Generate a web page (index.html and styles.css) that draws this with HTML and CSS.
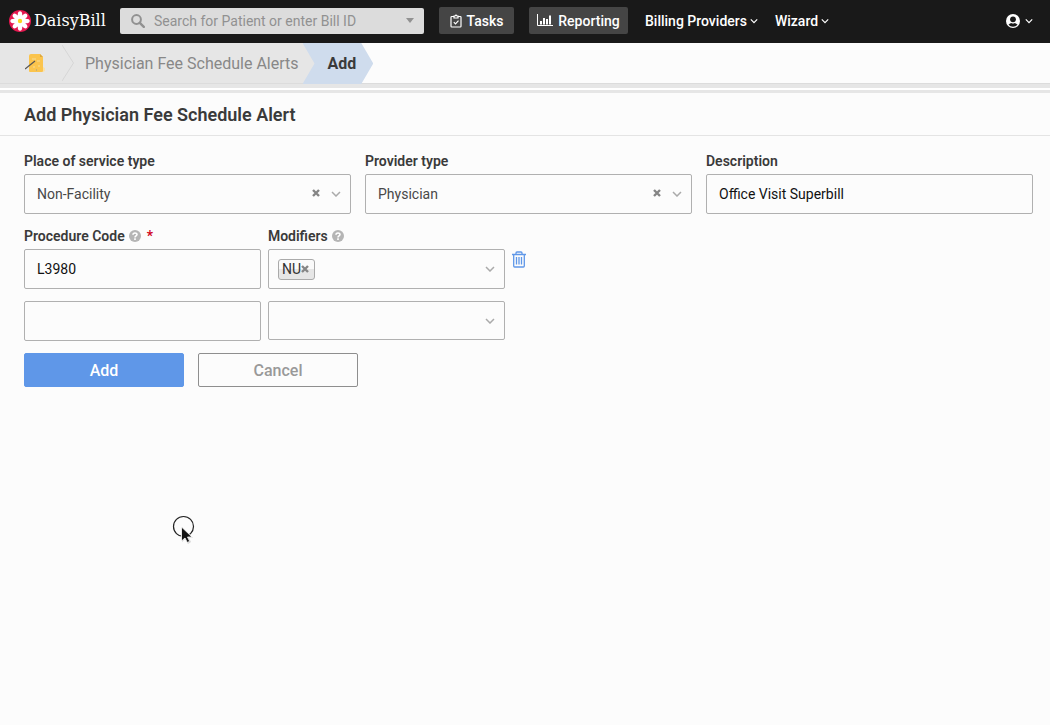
FILE: index.html
```html
<!DOCTYPE html>
<html lang="en">
<head>
<meta charset="utf-8">
<meta name="viewport" content="width=device-width, initial-scale=1">
<title>Add Physician Fee Schedule Alert</title>
<link rel="stylesheet" href="styles.css">
</head>
<body>
<svg class="sprite" aria-hidden="true">
  <symbol id="chevron" viewBox="0 0 10 6"><path d="M1 1l4 4 4-4" fill="none" stroke="currentColor" stroke-width="1.5"/></symbol>
  <symbol id="cross" viewBox="0 0 8 8"><path d="M1 1l6 6M7 1l-6 6" fill="none" stroke="currentColor" stroke-width="2.4"/></symbol>
  <symbol id="help" viewBox="0 0 12 12"><circle cx="6" cy="6" r="6" fill="#b5b5b5"/><path d="M4 4.7C4 2.4 8 2.4 8 4.6 8 6 6 5.900 6 7.400M6 8.300v1.600" fill="none" stroke="#fff" stroke-width="1.600"/></symbol>
</svg>

<header class="topbar">
  <a class="brand" href="#">
    <svg class="brand-mark" viewBox="0 0 22 22" aria-hidden="true">
      <circle cx="11" cy="11" r="11" fill="#e5174f"/>
      <g fill="#fff">
        <ellipse cx="11" cy="5.300" rx="2.300" ry="4"/>
        <ellipse cx="11" cy="5.300" rx="2.300" ry="4" transform="rotate(45 11 11)"/>
        <ellipse cx="11" cy="5.300" rx="2.300" ry="4" transform="rotate(90 11 11)"/>
        <ellipse cx="11" cy="5.300" rx="2.300" ry="4" transform="rotate(135 11 11)"/>
        <ellipse cx="11" cy="5.300" rx="2.300" ry="4" transform="rotate(180 11 11)"/>
        <ellipse cx="11" cy="5.300" rx="2.300" ry="4" transform="rotate(225 11 11)"/>
        <ellipse cx="11" cy="5.300" rx="2.300" ry="4" transform="rotate(270 11 11)"/>
        <ellipse cx="11" cy="5.300" rx="2.300" ry="4" transform="rotate(315 11 11)"/>
        <circle cx="11" cy="11" r="5"/>
      </g>
      <circle cx="11" cy="11" r="2.200" fill="#f9d71c"/>
    </svg>
    <span>DaisyBill</span>
  </a>
  <div class="search">
    <svg class="search-icon" viewBox="0 0 14 14" aria-hidden="true"><circle cx="5.500" cy="5.500" r="4.400" fill="none" stroke="#919191" stroke-width="2"/><path d="M8.800 8.800l4 4" stroke="#919191" stroke-width="2.400" stroke-linecap="round"/></svg>
    <input class="search-input" type="text" aria-label="Search" placeholder="Search for Patient or enter Bill ID">
    <svg class="caret" viewBox="0 0 8 5" aria-hidden="true"><path d="M0 0h8L4 5z" fill="#919191"/></svg>
  </div>
  <nav class="nav">
    <a class="nav-button" href="#">
      <svg class="tasks-icon" viewBox="0 0 12 14" aria-hidden="true"><path d="M3.500 2.500H1.800Q1 2.500 1 3.300v8.900q0 .8.800.8h8.400q.8 0 .8-.8V3.300q0-.8-.8-.8H8.500M4 4h4V2H7Q6 .2 5 2H4zM3.800 8.200l1.700 1.700 3-3.200" fill="none" stroke="currentColor" stroke-width="1.200"/></svg>
      Tasks
    </a>
    <a class="nav-button" href="#">
      <svg class="report-icon" viewBox="0 0 16 13" aria-hidden="true"><path d="M.5 0v11.500H16" fill="none" stroke="currentColor"/><path d="M3 7h2v3.500H3zM6 4h2v6.500H6zM9 5h2v5.500H9zM12 1.500h2v9h-2z" fill="currentColor"/></svg>
      Reporting
    </a>
    <a class="nav-link" href="#">Billing Providers <svg class="nav-chevron" aria-hidden="true"><use href="#chevron"/></svg></a>
    <a class="nav-link" href="#">Wizard <svg class="nav-chevron" aria-hidden="true"><use href="#chevron"/></svg></a>
  </nav>
  <button class="account" type="button" aria-label="Account">
    <svg class="account-icon" viewBox="0 0 14 14" aria-hidden="true"><circle cx="7" cy="7" r="7" fill="#fff"/><circle cx="7" cy="5.300" r="2.900" fill="#191919"/><path d="M2.500 10.800Q3.500 9.400 5.200 9q1.800 1 3.600 0 1.700.4 2.700 1.800Q9.800 12.700 7 12.700t-4.500-1.900z" fill="#191919"/></svg>
    <svg class="nav-chevron" aria-hidden="true"><use href="#chevron"/></svg>
  </button>
</header>

<nav class="crumbs" aria-label="Breadcrumb">
  <a class="crumb crumb-home" href="#" aria-label="Home">
    <svg class="note-icon" viewBox="0 0 20 20" aria-hidden="true"><path d="M6 1h9l3 3v14q0 1-1 1H5q-1 0-1-1V3q0-2 2-2z" fill="#fbc44d"/><path d="M15 1v3h3z" fill="#dda83d"/><path d="M18 14l2 1v3l-2 1z" fill="#fae1a8"/><path d="M7 6h2M12 8h3M8 14h2M13 13h2M10 5v2" stroke="#f6dc98"/><path d="M11 17h1" stroke="#8e9aa0"/><path d="M0 16L10 8" stroke="#555" stroke-width="1.300"/></svg>
  </a>
  <svg class="crumb-sep" viewBox="0 0 12 40" preserveAspectRatio="none" aria-hidden="true"><path d="M0 2l11.500 18L0 38" fill="none" stroke="#d6d6d6"/></svg>
  <a class="crumb crumb-parent" href="#">Physician Fee Schedule Alerts</a>
  <span class="crumb crumb-current" aria-current="page">Add</span>
</nav>

<main>
  <h1 class="title">Add Physician Fee Schedule Alert</h1>
  <form class="form">
    <div class="row row-main">
      <div class="field">
        <label class="label" for="pos">Place of service type</label>
        <div class="picker">
          <select class="control" id="pos"><option>Non-Facility</option></select>
          <button class="clear" type="button" aria-label="Clear place of service type"><svg class="cross" aria-hidden="true"><use href="#cross"/></svg></button>
          <svg class="chevron" aria-hidden="true"><use href="#chevron"/></svg>
        </div>
      </div>
      <div class="field">
        <label class="label" for="provider">Provider type</label>
        <div class="picker">
          <select class="control" id="provider"><option>Physician</option></select>
          <button class="clear" type="button" aria-label="Clear provider type"><svg class="cross" aria-hidden="true"><use href="#cross"/></svg></button>
          <svg class="chevron" aria-hidden="true"><use href="#chevron"/></svg>
        </div>
      </div>
      <div class="field">
        <label class="label" for="description">Description</label>
        <input class="control" id="description" type="text" value="Office Visit Superbill">
      </div>
    </div>
    <div class="row row-code">
      <div class="field">
        <label class="label" for="code-1">Procedure Code <svg class="help" aria-hidden="true"><use href="#help"/></svg><span class="required">*</span></label>
        <input class="control" id="code-1" type="text" value="L3980" required>
      </div>
      <div class="field">
        <label class="label" for="mod-1">Modifiers <svg class="help" aria-hidden="true"><use href="#help"/></svg></label>
        <div class="picker tags">
          <span class="tag">NU<button class="tag-remove" type="button" aria-label="Remove NU"><svg class="cross" aria-hidden="true"><use href="#cross"/></svg></button></span>
          <input class="tag-input" id="mod-1" type="text">
          <svg class="chevron" aria-hidden="true"><use href="#chevron"/></svg>
        </div>
      </div>
      <button class="trash" type="button" aria-label="Delete row">
        <svg class="trash-icon" viewBox="0 0 14 17" aria-hidden="true"><path d="M0 3.500h14M4 3.500V2q0-1 1-1h4q1 0 1 1v1.500M1.700 3.500V15q0 1 1 1h8.600q1 0 1-1V3.500M4.500 6v7.500M7 6v7.500M9.500 6v7.500" fill="none" stroke="#5f97e8" stroke-width="1.300"/></svg>
      </button>
    </div>
    <div class="row row-code">
      <input class="control" type="text" aria-label="Procedure Code">
      <div class="picker">
        <select class="control control-blank" aria-label="Modifiers"><option></option></select>
        <svg class="chevron" aria-hidden="true"><use href="#chevron"/></svg>
      </div>
    </div>
    <div class="actions">
      <button class="button button-primary" type="submit">Add</button>
      <button class="button" type="button">Cancel</button>
    </div>
  </form>
</main>

<svg class="cursor" viewBox="0 0 26 32" aria-hidden="true">
  <circle cx="11.500" cy="11.500" r="10" fill="none" stroke="#222" stroke-width="1.200"/>
  <path d="M10 12v15l3-3 3 5 3-2-2-4h4z" fill="#bbb" opacity=".6"/>
  <path d="M9.500 12v14l3.500-3 2.300 4.500 2.400-1.200L15.500 22H20z" fill="#111" stroke="#fff" stroke-width=".8"/>
</svg>
</body>
</html>
```
FILE: styles.css
```css
* {
  box-sizing: border-box;
}

body {
  margin: 0;
  min-height: 100vh;
  background: #fcfcfc;
  color: #3a3a3a;
  font-family: Roboto, "Liberation Sans", sans-serif;
  font-size: 14px;
}

a {
  color: inherit;
  text-decoration: none;
}

button,
input,
select {
  font: inherit;
}

.sprite {
  display: none;
}

/* Top bar */
.topbar {
  display: flex;
  align-items: center;
  height: 43px;
  padding: 0 17px 2px 9px;
  background: #191919;
  color: #fff;
}

.brand {
  display: flex;
  align-items: center;
  gap: 3px;
  width: 111px;
  font-family: "DejaVu Serif", serif;
  font-size: 16px;
}

.brand-mark {
  flex: none;
  width: 22px;
  height: 22px;
}

.search {
  display: flex;
  align-items: center;
  gap: 9px;
  width: 304px;
  height: 26px;
  padding: 0 10px 0 11px;
  border-radius: 2px;
  background: #dcdcdc;
}

.search-icon {
  flex: none;
  width: 14px;
  height: 14px;
}

.search-input {
  flex: 1;
  min-width: 0;
  padding: 0;
  border: 0;
  background: transparent;
}

.search-input::placeholder {
  color: #919191;
}

.caret {
  flex: none;
  width: 8px;
  height: 5px;
}

.nav {
  display: flex;
  align-items: center;
  font-weight: 500;
}

.nav-button {
  display: flex;
  align-items: center;
  justify-content: center;
  gap: 5px;
  width: 99px;
  height: 27px;
  margin-left: 15px;
  border-radius: 2px;
  background: #454545;
}

.nav-button:first-child {
  width: 75px;
}

.tasks-icon {
  width: 12px;
  height: 14px;
}

.report-icon {
  width: 16px;
  height: 13px;
}

.nav-link {
  display: flex;
  align-items: center;
  gap: 3px;
  margin-left: 17px;
}

.nav-chevron {
  width: 8px;
  height: 6px;
}

.account {
  display: flex;
  align-items: center;
  gap: 5px;
  margin-left: auto;
  padding: 0;
  border: 0;
  background: transparent;
  color: #fff;
}

.account-icon {
  width: 14px;
  height: 14px;
}

/* Breadcrumb */
.crumbs {
  display: flex;
  height: 50px;
  border-bottom: 3px solid #e6e6e6;
  background: linear-gradient(#fcfcfc 40px, #dcdcdc 40px 41px, #e6e6e6 41px 45px, #fff 45px);
  font-size: 16px;
}

.crumb {
  display: flex;
  align-items: center;
  height: 40px;
  background: #e6e6e6;
}

.crumb-home {
  width: 62px;
  padding-left: 25px;
}

.note-icon {
  width: 20px;
  height: 20px;
}

.crumb-sep {
  width: 12px;
  height: 40px;
  background: #e6e6e6;
}

.crumb-parent {
  padding: 0 17px 0 11px;
  color: #888;
}

.crumb-current {
  height: 41px;
  margin-left: -13px;
  padding: 0 17px 0 25px;
  background: #cfdced;
  clip-path: polygon(0 0, calc(100% - 12px) 0, 100% 50%, calc(100% - 12px) 100%, 0 100%, 12px 50%);
  font-weight: 700;
}

/* Form */
.title {
  margin: 0;
  padding: 10px 24px 8px;
  border-bottom: 1px solid #e4e4e4;
  font-size: 18px;
  font-weight: 600;
  line-height: 24px;
}

.form {
  display: grid;
  gap: 12px;
  padding: 15px 17px 24px 24px;
}

.row {
  display: grid;
}

.row-main {
  grid-template-columns: repeat(3, minmax(0, 1fr));
  gap: 14px;
}

.row-code {
  grid-template-columns: minmax(0, 5fr) minmax(0, 5fr) minmax(0, 11fr);
  gap: 7px;
}

.label {
  display: flex;
  align-items: center;
  gap: 4px;
  margin-bottom: 3px;
  font-weight: 600;
  line-height: 20px;
}

.help {
  width: 12px;
  height: 12px;
}

.required {
  margin-left: 2px;
  color: #d0021b;
}

.control {
  display: block;
  width: 100%;
  height: 40px;
  padding: 0 12px;
  border: 1px solid #b0b0b0;
  border-radius: 2px;
  background: transparent;
  color: #111;
}

select.control {
  appearance: none;
  color: #484848;
}

.row .control-blank {
  height: 39px;
}

.picker {
  position: relative;
}

.chevron {
  position: absolute;
  top: 17px;
  right: 10px;
  width: 10px;
  height: 6px;
  color: #aaa;
  pointer-events: none;
}

.clear {
  position: absolute;
  top: 11px;
  right: 27px;
  display: flex;
  padding: 4px;
  border: 0;
  background: transparent;
  color: #858585;
}

.cross {
  width: 8px;
  height: 8px;
}

.tags {
  display: flex;
  align-items: center;
  height: 40px;
  padding: 0 30px 0 9px;
  border: 1px solid #b0b0b0;
  border-radius: 2px;
}

.tags .chevron {
  top: 16px;
  right: 9px;
}

.tag {
  display: flex;
  align-items: center;
  height: 21px;
  padding: 0 5px 0 3px;
  border: 1px solid #aaa;
  border-radius: 3px;
  background: linear-gradient(#fafafa 50%, #e6e6e6 50%);
  color: #333;
}

.tag-remove {
  display: flex;
  padding: 0;
  border: 0;
  background: transparent;
  color: #858585;
}

.tag-input {
  flex: 1;
  min-width: 0;
  border: 0;
  background: transparent;
}

.trash {
  align-self: start;
  justify-self: start;
  display: flex;
  margin-top: 25px;
  padding: 0;
  border: 0;
  background: transparent;
}

.trash-icon {
  width: 14px;
  height: 17px;
}

.actions {
  display: flex;
  gap: 14px;
}

.button {
  width: 160px;
  height: 34px;
  padding: 0;
  border: 1px solid #8e8e8e;
  border-radius: 2px;
  background: transparent;
  color: #999;
  font-size: 16px;
  font-weight: 500;
}

.button-primary {
  border-color: #5f97e8;
  background: #5f97e8;
  color: #fff;
}

/* Pointer */
.cursor {
  position: absolute;
  top: 515px;
  left: 172px;
  width: 26px;
  height: 32px;
  pointer-events: none;
}
```
